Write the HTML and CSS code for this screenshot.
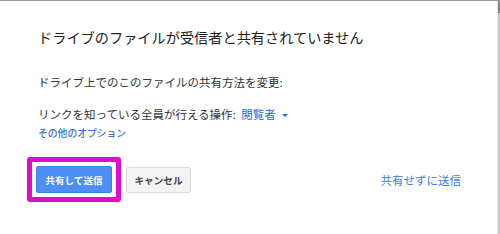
FILE: index.html
```html
<!DOCTYPE html>
<html lang="ja">
<head>
<meta charset="utf-8">
<link rel="stylesheet" href="styles.css">
</head>
<body>
<div class="frame">
  <div class="dialog">
    <div class="title">ドライブのファイルが受信者と共有されていません</div>
    <div class="text first">ドライブ上でのこのファイルの共有方法を変更:</div>
    <div class="text second">リンクを知っている全員が行える操作: <span class="role">閲覧者<span class="caret"></span></span></div>
    <div class="options">その他のオプション</div>
    <div class="actions">
      <div class="highlight"><button class="btn primary">共有して送信</button></div>
      <button class="btn secondary">キャンセル</button>
      <span class="skip">共有せずに送信</span>
    </div>
  </div>
  <div class="scroll"><div class="thumb"></div></div>
</div>
</body>
</html>
```

FILE: styles.css
```css
html, body {
  margin: 0;
  padding: 0;
  background: #ffffff;
}
body {
  width: 500px;
  height: 234px;
  overflow: hidden;
  font-family: "Noto Sans CJK JP", "Noto Sans", sans-serif;
}
.frame {
  display: flex;
  height: 234px;
  border-top: 1px solid #9a9a9a;
  box-sizing: border-box;
}
.dialog {
  flex: 1;
  padding: 26px 36px 0 38px;
  border-right: 1px solid #e4e4e4;
}
.scroll {
  width: 2px;
  background: #c9c9c9;
}
.thumb {
  height: 12px;
  background: #858585;
}
.title {
  font-size: 14.2px;
  line-height: 20px;
  color: #222222;
  white-space: nowrap;
}
.text {
  font-size: 11.5px;
  line-height: 16px;
  color: #333333;
  white-space: nowrap;
}
.first { margin-top: 27px; }
.second { margin-top: 16px; }
.role {
  color: #2d6bd9;
  margin-left: 3px;
}
.caret {
  display: inline-block;
  width: 0;
  height: 0;
  border-left: 3px solid transparent;
  border-right: 3px solid transparent;
  border-top: 3.5px solid #2d6bd9;
  margin-left: 6px;
  vertical-align: 2px;
}
.options {
  margin-top: 4px;
  font-size: 9.8px;
  line-height: 14px;
  font-weight: 500;
  color: #3a70d8;
  white-space: nowrap;
}
.actions {
  display: flex;
  align-items: center;
  margin-top: 17px;
  margin-left: -11px;
}
.highlight {
  border: 5px solid #e10cc8;
  border-radius: 3px;
  padding: 4px;
  background: #ffffff;
  display: flex;
}
.btn {
  font-family: "Noto Sans CJK JP", "Noto Sans", sans-serif;
  font-weight: 700;
  font-size: 9.6px;
  border-radius: 2px;
  padding: 0;
  margin: 0;
  box-sizing: border-box;
}
.primary {
  width: 76px;
  height: 27px;
  background: #4d8ff4;
  border: 1px solid #3e7fe6;
  color: #ffffff;
}
.secondary {
  width: 65px;
  height: 26px;
  margin-left: 5px;
  background: #f3f3f3;
  border: 1px solid #dcdcdc;
  color: #444444;
}
.skip {
  margin-left: auto;
  font-size: 11.5px;
  line-height: 16px;
  color: #3b7adf;
  white-space: nowrap;
}
```
